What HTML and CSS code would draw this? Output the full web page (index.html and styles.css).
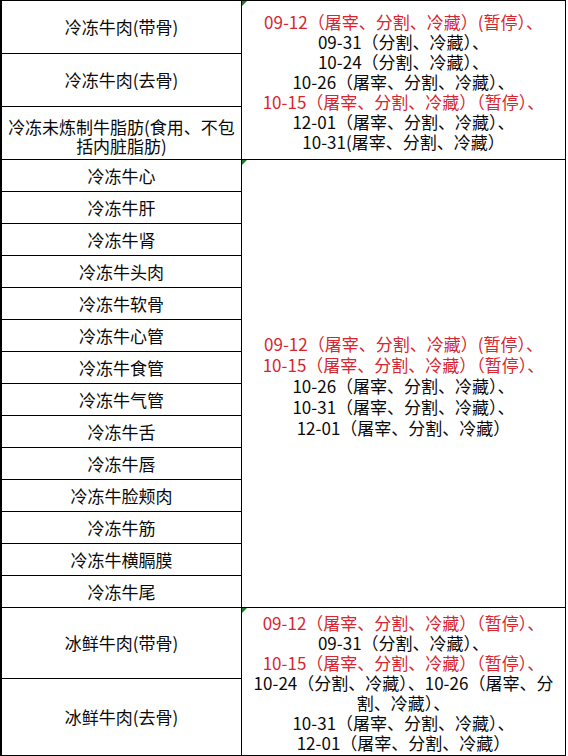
FILE: index.html
```html
<!DOCTYPE html>
<html lang="zh-CN">
<head>
<meta charset="utf-8">
<title>牛肉产品表</title>
<link rel="stylesheet" href="styles.css">
</head>
<body>
<div class="sheet">
  <div class="cell name tall">冷冻牛肉(带骨)</div>
  <div class="cell dates span-a">
    <div class="ln red">09-12（屠宰、分割、冷藏）(暂停）、</div>
    <div class="ln">09-31（分割、冷藏）、</div>
    <div class="ln">10-24（分割、冷藏）、</div>
    <div class="ln">10-26（屠宰、分割、冷藏）、</div>
    <div class="ln red">10-15（屠宰、分割、冷藏）（暂停）、</div>
    <div class="ln">12-01（屠宰、分割、冷藏）、</div>
    <div class="ln">10-31(屠宰、分割、冷藏）</div>
  </div>
  <div class="cell name tall">冷冻牛肉(去骨)</div>
  <div class="cell name tall two">冷冻未炼制牛脂肪(食用、不包<br>括内脏脂肪)</div>

  <div class="cell name">冷冻牛心</div>
  <div class="cell dates span-b">
    <div class="ln red">09-12（屠宰、分割、冷藏）(暂停）、</div>
    <div class="ln red">10-15（屠宰、分割、冷藏）（暂停）、</div>
    <div class="ln">10-26（屠宰、分割、冷藏）、</div>
    <div class="ln">10-31（屠宰、分割、冷藏）、</div>
    <div class="ln">12-01（屠宰、分割、冷藏）</div>
  </div>
  <div class="cell name">冷冻牛肝</div>
  <div class="cell name">冷冻牛肾</div>
  <div class="cell name">冷冻牛头肉</div>
  <div class="cell name">冷冻牛软骨</div>
  <div class="cell name">冷冻牛心管</div>
  <div class="cell name">冷冻牛食管</div>
  <div class="cell name">冷冻牛气管</div>
  <div class="cell name">冷冻牛舌</div>
  <div class="cell name">冷冻牛唇</div>
  <div class="cell name">冷冻牛脸颊肉</div>
  <div class="cell name">冷冻牛筋</div>
  <div class="cell name">冷冻牛横膈膜</div>
  <div class="cell name">冷冻牛尾</div>

  <div class="cell name">冰鲜牛肉(带骨)</div>
  <div class="cell dates span-c">
    <div class="ln red">09-12（屠宰、分割、冷藏）（暂停）、</div>
    <div class="ln">09-31（分割、冷藏）、</div>
    <div class="ln red">10-15（屠宰、分割、冷藏）（暂停）、</div>
    <div class="ln">10-24（分割、冷藏）、10-26（屠宰、分</div>
    <div class="ln">割、冷藏）、</div>
    <div class="ln">10-31（屠宰、分割、冷藏）、</div>
    <div class="ln">12-01（屠宰、分割、冷藏）</div>
  </div>
  <div class="cell name">冰鲜牛肉(去骨)</div>
</div>
</body>
</html>
```

FILE: styles.css
```css
html, body {
  margin: 0;
  padding: 0;
  background: #ffffff;
}

body {
  font-family: "Noto Sans CJK SC", "Noto Sans", sans-serif;
  font-size: 17px;
  color: #0a0a0a;
}

.sheet {
  display: grid;
  grid-template-columns: 240px 324px;
  grid-template-rows: 53px 53px 53px repeat(14, 32px) 71px 77px;
  width: 566px;
  box-sizing: border-box;
  border-left: 2px solid #000000;
  border-top: 1px solid #000000;
}

.cell {
  box-sizing: border-box;
  border-right: 1px solid #000000;
  border-bottom: 1px solid #000000;
  display: flex;
  flex-direction: column;
  align-items: center;
  justify-content: center;
  text-align: center;
  line-height: 20px;
}

.name {
  grid-column: 1;
  white-space: nowrap;
}

.two {
  line-height: 19px;
  padding-top: 6px;
}

.dates {
  grid-column: 2;
  position: relative;
}

.dates::before {
  content: "";
  position: absolute;
  top: 0;
  left: 0;
  width: 0;
  height: 0;
  border-top: 5px solid #1d7a26;
  border-right: 5px solid transparent;
}

.span-a {
  grid-row: 1 / span 3;
  padding-top: 3px;
}

.span-b {
  grid-row: 4 / span 14;
  line-height: 21px;
  padding-top: 4px;
}

.span-c {
  grid-row: 18 / span 2;
  padding-top: 2px;
}

.ln {
  white-space: nowrap;
}

.red {
  color: #d8262f;
}
```
